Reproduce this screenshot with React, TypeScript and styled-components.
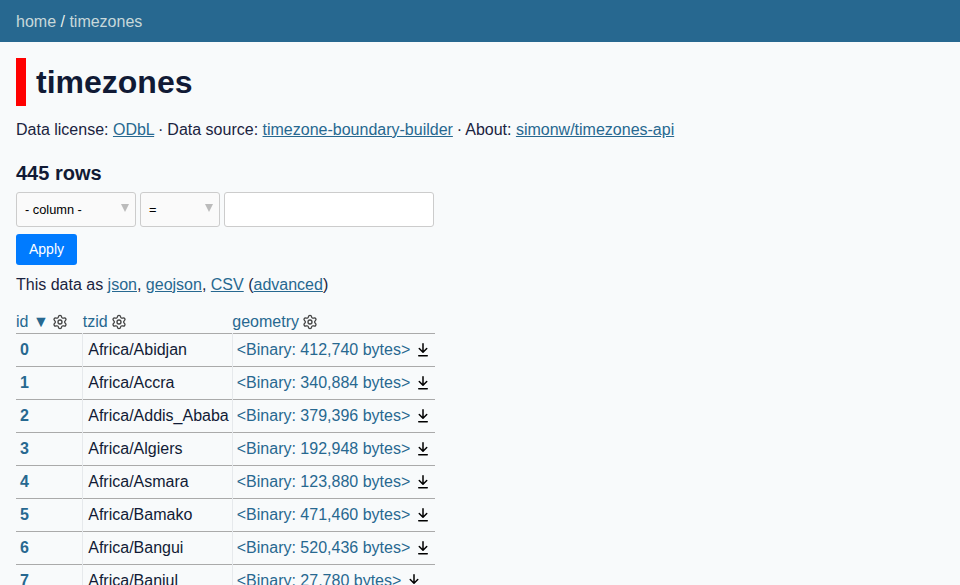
import React from "react";
import styled, { createGlobalStyle } from "styled-components";
import { Settings } from "lucide-react";

const Global = createGlobalStyle`
  html, body { margin: 0; padding: 0; height: 585px; overflow: hidden; }
  body {
    background: #f8fafb;
    color: #111a35;
    font-family: "Liberation Sans", Arial, sans-serif;
    font-size: 16px;
    line-height: 1.5;
  }
`;

const Nav = styled.header`
  background: #276890;
  color: rgba(255, 255, 244, 0.9);
  padding: 10px 16px;
  height: 42px;
  box-sizing: border-box;
  line-height: 24px;
`;
const Crumb = styled.a`
  color: rgba(255, 255, 244, 0.75);
  text-decoration: none;
`;
const Main = styled.section`
  padding: 16px 16px 0;
`;
const Title = styled.h1`
  margin: 0;
  padding-left: 10px;
  border-left: 10px solid #ff0000;
  font-size: 32px;
  font-weight: 700;
  line-height: 48px;
  color: #111a35;
`;
const Meta = styled.p`
  margin: 12px 0 0;
  line-height: 24px;
  color: #1a2340;
`;
const Sep = styled.span`
  margin: 0 -0.5px;
`;
const Link = styled.a`
  color: #276890;
  text-decoration: underline;
`;
const Count = styled.h3`
  margin: 17px 0 0;
  font-size: 20px;
  line-height: 28px;
  font-weight: 700;
`;
const Filters = styled.div`
  display: flex;
  gap: 4px;
  margin-top: 5px;
`;
const SelectBox = styled.div<{ $w: number }>`
  position: relative;
  box-sizing: border-box;
  width: ${(p) => p.$w}px;
  height: 35px;
  background: #fafafa;
  border: 1px solid #ccc;
  border-radius: 3px;
  padding-left: 8px;
  font-size: 12.8px;
  line-height: 33px;
  color: #000;
`;
const Arrow = styled.span`
  position: absolute;
  right: 6px;
  top: 11px;
  width: 0;
  height: 0;
  border-left: 4px solid transparent;
  border-right: 4px solid transparent;
  border-top: 8px solid #bbb;
`;
const TextInput = styled.input`
  box-sizing: border-box;
  width: 210px;
  height: 35px;
  background: #fff;
  border: 1px solid #ccc;
  border-radius: 3px;
  padding: 0;
`;
const Apply = styled.button`
  display: block;
  box-sizing: border-box;
  margin-top: 7px;
  width: 61px;
  height: 31px;
  padding: 0 0 2px;
  background: #007bff;
  color: #fff;
  border: 0;
  border-radius: 3px;
  font: 14px "Liberation Sans", Arial, sans-serif;
`;
const Export = styled.p`
  margin: 8px 0 0;
  line-height: 24px;
  color: #1a2340;
`;
const Table = styled.table`
  margin-top: 13px;
  border-collapse: collapse;
  border-spacing: 0;
`;
const Th = styled.th`
  padding: 0 14.5px 0 0;
  text-align: left;
  font-weight: 400;
  line-height: 23px;
  white-space: nowrap;
  color: #276890;
  &:last-child { padding-right: 0; }
`;
const HeadInner = styled.span`
  display: inline-flex;
  align-items: center;
  gap: 3.5px;
`;
const Gear = styled(Settings)`
  color: #444;
  flex: none;
`;
const Row = styled.tr`
  border-top: 1px solid #aaa;
`;
const Td = styled.td`
  padding: 4px;
  line-height: 24px;
  white-space: nowrap;
  border-left: 1px solid #e6e9ec;
  &:first-child { border-left: 0; }
  &:nth-child(2) { padding-left: 5px; padding-right: 3px; }
`;
const IdLink = styled.a`
  color: #276890;
  font-weight: 700;
  text-decoration: none;
`;
const BinLink = styled.a`
  color: #276890;
  text-decoration: none;
`;
const DlIcon = styled.svg`
  width: 16px;
  height: 16px;
  fill: #000;
  vertical-align: -3px;
`;

const Download = () => (
  <DlIcon viewBox="0 0 16 16" aria-hidden="true">
    <path d="M7.47 10.78a.75.75 0 0 0 1.06 0l3.75-3.75a.75.75 0 0 0-1.06-1.06L8.75 8.44V1.75a.75.75 0 0 0-1.5 0v6.69L4.78 5.97a.75.75 0 0 0-1.06 1.06l3.75 3.75ZM3.75 13a.75.75 0 0 0 0 1.5h8.5a.75.75 0 0 0 0-1.5h-8.5Z" />
  </DlIcon>
);

const rows: [string, string, string][] = [
  ["0", "Africa/Abidjan", "412,740"],
  ["1", "Africa/Accra", "340,884"],
  ["2", "Africa/Addis_Ababa", "379,396"],
  ["3", "Africa/Algiers", "192,948"],
  ["4", "Africa/Asmara", "123,880"],
  ["5", "Africa/Bamako", "471,460"],
  ["6", "Africa/Bangui", "520,436"],
  ["7", "Africa/Banjul", "27,780"],
];

export default function App() {
  return (
    <>
      <Global />
      <Nav>
        <Crumb href="#">home</Crumb> / <Crumb href="#">timezones</Crumb>
      </Nav>
      <Main>
        <Title>timezones</Title>
        <Meta>
          Data license: <Link href="#">ODbL</Link> <Sep>·</Sep> Data source:{" "}
          <Link href="#">timezone-boundary-builder</Link> <Sep>·</Sep> About:{" "}
          <Link href="#">simonw/timezones-api</Link>
        </Meta>
        <Count>445 rows</Count>
        <Filters>
          <SelectBox $w={120}>- column -<Arrow /></SelectBox>
          <SelectBox $w={80}>=<Arrow /></SelectBox>
          <TextInput aria-label="value" />
        </Filters>
        <Apply>Apply</Apply>
        <Export>
          This data as <Link href="#">json</Link>, <Link href="#">geojson</Link>,{" "}
          <Link href="#">CSV</Link> (<Link href="#">advanced</Link>)
        </Export>
        <Table>
          <thead>
            <tr>
              <Th><HeadInner>id ▼ <Gear size={16} strokeWidth={2} /></HeadInner></Th>
              <Th><HeadInner>tzid <Gear size={16} strokeWidth={2} /></HeadInner></Th>
              <Th><HeadInner>geometry <Gear size={16} strokeWidth={2} /></HeadInner></Th>
            </tr>
          </thead>
          <tbody>
            {rows.map(([id, tz, size]) => (
              <Row key={id}>
                <Td><IdLink href="#">{id}</IdLink></Td>
                <Td>{tz}</Td>
                <Td>
                  <BinLink href="#">&lt;Binary: {size} bytes&gt;</BinLink> <Download />
                </Td>
              </Row>
            ))}
          </tbody>
        </Table>
      </Main>
    </>
  );
}
